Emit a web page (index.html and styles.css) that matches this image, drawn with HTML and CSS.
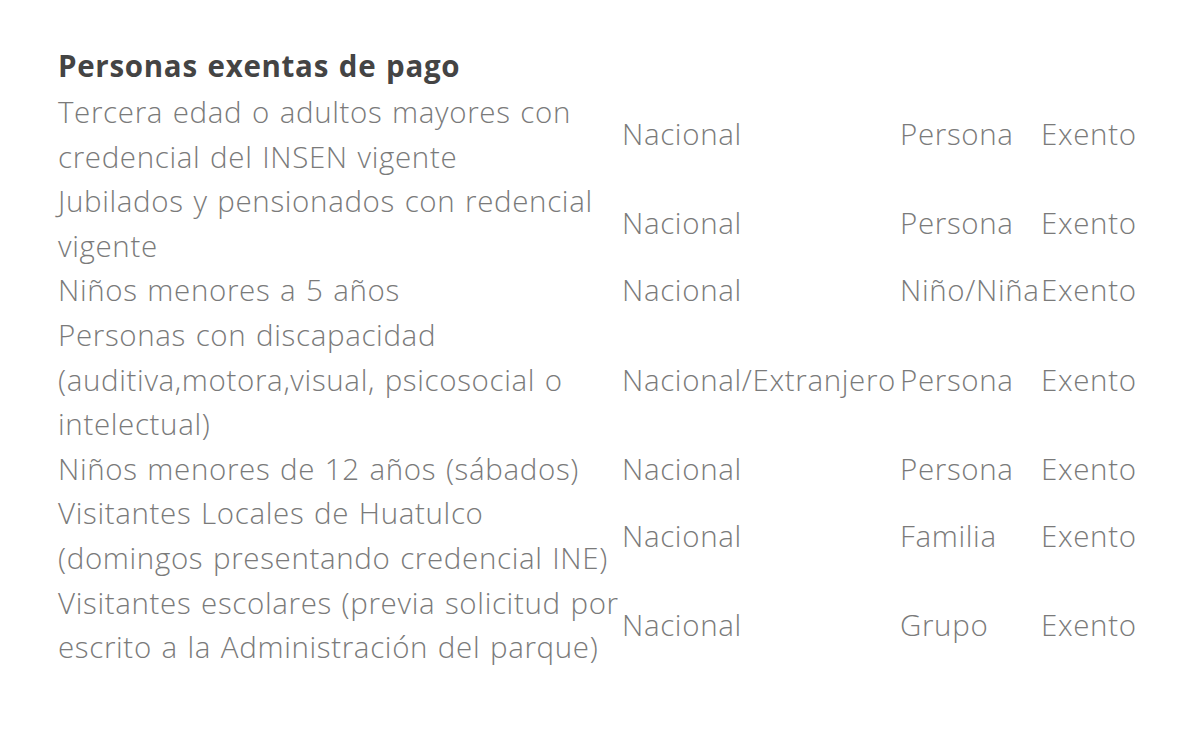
FILE: index.html
```html
<!DOCTYPE html>
<html lang="es">
<head>
<meta charset="utf-8">
<title>Personas exentas de pago</title>
<link rel="stylesheet" href="styles.css">
</head>
<body>
<div class="page">
  <table class="tarifas">
    <colgroup>
      <col class="c-desc">
      <col class="c-orig">
      <col class="c-unit">
      <col class="c-cost">
    </colgroup>
    <tbody>
      <tr class="head-row"><td colspan="4" class="head">Personas exentas de pago</td></tr>
      <tr><td>Tercera edad o adultos mayores con credencial del INSEN vigente</td><td>Nacional</td><td>Persona</td><td>Exento</td></tr>
      <tr><td>Jubilados y pensionados con redencial vigente</td><td>Nacional</td><td>Persona</td><td>Exento</td></tr>
      <tr><td>Niños menores a 5 años</td><td>Nacional</td><td>Niño/Niña</td><td>Exento</td></tr>
      <tr><td>Personas con discapacidad (auditiva,motora,visual, psicosocial o intelectual)</td><td>Nacional/Extranjero</td><td>Persona</td><td>Exento</td></tr>
      <tr><td>Niños menores de 12 años (sábados)</td><td>Nacional</td><td>Persona</td><td>Exento</td></tr>
      <tr><td>Visitantes Locales de Huatulco (domingos presentando credencial INE)</td><td>Nacional</td><td>Familia</td><td>Exento</td></tr>
      <tr><td>Visitantes escolares (previa solicitud por escrito a la Administración del parque)</td><td>Nacional</td><td>Grupo</td><td>Exento</td></tr>
    </tbody>
  </table>
</div>
</body>
</html>
```
FILE: styles.css
```css
html, body {
  margin: 0;
  padding: 0;
  background: #ffffff;
}
.page {
  padding: 44px 0 0 58px;
  font-family: "Open Sans", "Noto Sans", sans-serif;
}
.tarifas {
  border-collapse: collapse;
  table-layout: fixed;
  width: 1090px;
  font-size: 29.5px;
  line-height: 44.6px;
  font-weight: 300;
  letter-spacing: 0.65px;
  word-spacing: 1.4px;
  color: #7a7a7a;
}
.c-desc { width: 564px; }
.c-orig { width: 278px; }
.c-unit { width: 141px; }
.c-cost { width: 107px; }
.tarifas td {
  padding: 0;
  vertical-align: middle;
}
.tarifas td:not(:first-child) { white-space: nowrap; }
.head-row td {
  height: 46px;
  vertical-align: top;
}
.head {
  font-weight: 700;
  letter-spacing: 0.7px;
  color: #444444;
}
```
